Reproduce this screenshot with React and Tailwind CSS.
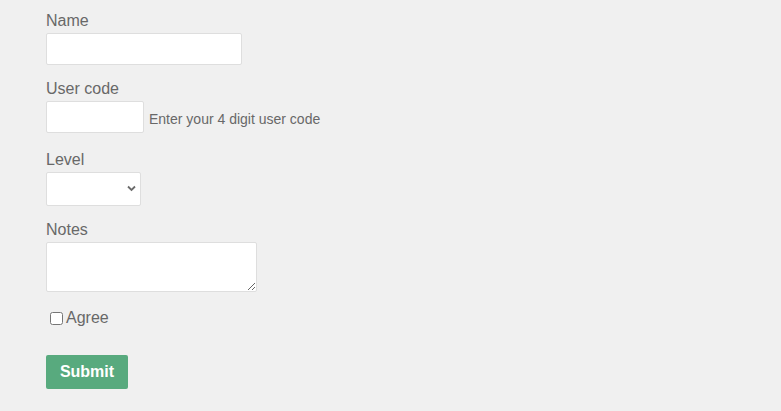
import React from "react";

export default function App() {
  const font = { fontFamily: '"Liberation Sans", Arial, sans-serif' };
  return (
    <div className="min-h-[411px] w-full bg-[#f0f0f0] pl-[46px] pt-[11px] text-[#686868]" style={font}>
      <form className="flex flex-col items-start" onSubmit={(e) => e.preventDefault()}>
        <label className="block text-[16px] leading-[20px]">Name</label>
        <input type="text" className="mt-[2px] h-[32px] w-[196px] rounded-[2px] border border-[#dedede] bg-white px-2 text-[14px] outline-none" />

        <label className="mt-[14px] block text-[16px] leading-[20px]">User code</label>
        <div className="mt-[2px] flex items-center">
          <input type="text" className="h-[32px] w-[98px] rounded-[2px] border border-[#dedede] bg-white px-2 text-[14px] outline-none" />
          <span className="ml-[5px] mt-[4px] text-[14px] leading-[16px]">Enter your 4 digit user code</span>
        </div>

        <label className="mt-[17px] block text-[16px] leading-[20px]">Level</label>
        <div className="relative mt-[2px] h-[34px] w-[95px]">
          <select className="h-full w-full appearance-none rounded-[2px] border border-[#dedede] bg-white px-2 text-[14px] outline-none">
            <option></option>
          </select>
          <svg className="pointer-events-none absolute left-[81px] top-[13px]" width="9" height="7" viewBox="0 0 9 7">
            <path d="M1 1.5 L4.5 5 L8 1.5" fill="none" stroke="#6b6b6b" strokeWidth="1.8" />
          </svg>
        </div>

        <label className="mt-[14px] block text-[16px] leading-[20px]">Notes</label>
        <textarea className="mt-[2px] h-[50px] w-[211px] rounded-[2px] border border-[#dedede] bg-white px-2 text-[14px] outline-none" />

        <label className="mt-[16px] flex items-center text-[16px] leading-[20px]">
          <input type="checkbox" className="ml-[4px] mr-[3px] h-[13px] w-[13px]" />
          Agree
        </label>

        <button type="submit" className="mt-[27px] h-[34px] w-[82px] rounded-[2px] bg-[#58aa7e] text-[16px] font-bold text-white">
          Submit
        </button>
      </form>
    </div>
  );
}
